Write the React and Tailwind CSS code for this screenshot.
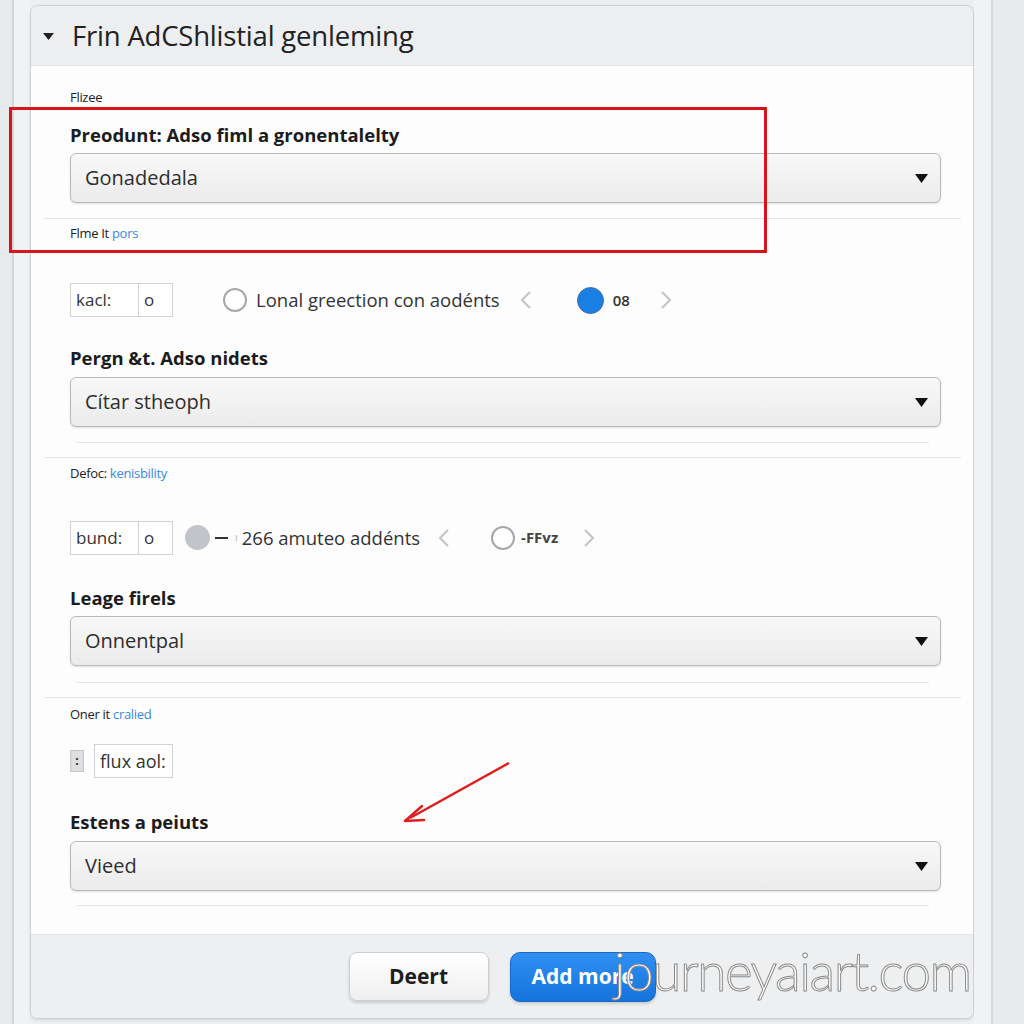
function Caret() {
  return (
    <svg width="13" height="9" viewBox="0 0 13 9">
      <path d="M0 0 H13 L6.5 9 Z" fill="#111" />
    </svg>
  );
}

function Chevron({ dir }) {
  return (
    <svg width="14" height="20" viewBox="0 0 14 20">
      <polyline
        points={dir === 'left' ? '11,2 3,10 11,18' : '3,2 11,10 3,18'}
        fill="none"
        stroke="#c3c5c8"
        strokeWidth="2.2"
      />
    </svg>
  );
}

function SelectBox({ value }) {
  return (
    <div className="h-[50px] mr-[32px] rounded-[6px] border border-[#b6b9bd] bg-gradient-to-b from-[#f8f8f8] to-[#ebebeb] shadow-[0_1px_2px_rgba(0,0,0,0.12)] flex items-center justify-between pl-[14px] pr-[12px]">
      <span className="text-[20px] text-[#2e2e2e]">{value}</span>
      <Caret />
    </div>
  );
}

function Label({ children, className }) {
  return <div className={'text-[18.5px] font-bold text-[#1c1c1c] leading-[24px] ' + className}>{children}</div>;
}

function Caption({ text, link, className }) {
  return (
    <div className={'text-[13px] leading-[16px] text-[#222] tracking-[-0.3px] ' + className}>
      {text} <span className="text-[#3a8ad8]">{link}</span>
    </div>
  );
}

function SmallInput({ label }) {
  return (
    <div className="flex h-[34px] w-[103px] border border-[#cfd2d5] bg-white text-[17px] text-[#333]">
      <div className="w-[68px] border-r border-[#cfd2d5] flex items-center pl-[5px]">{label}</div>
      <div className="flex-1 flex items-center pl-[5px]">o</div>
    </div>
  );
}

export default function App() {
  return (
    <div className="relative w-[1024px] h-[1024px] overflow-hidden flex bg-[#eceef0] font-['Open_Sans','Noto_Sans',sans-serif]">
      <div className="w-[12px] bg-[#e7e9eb]" />
      <div className="w-[2px] bg-[#d3d6d9]" />
      <div className="w-[16px] bg-[#f1f2f4]" />

      <div className="w-[944px] mt-[5px] h-[1014px] flex flex-col rounded-[8px] border border-[#cdd0d4] bg-white shadow-[0_1px_3px_rgba(0,0,0,0.1)] overflow-hidden">
        <div className="h-[60px] bg-[#eceef0] border-b border-[#dfe1e4] flex items-center pl-[12px]">
          <svg width="11" height="7" viewBox="0 0 11 7" className="mt-[2px]">
            <path d="M0 0 H11 L5.5 7 Z" fill="#222" />
          </svg>
          <span className="ml-[18px] text-[27.5px] text-[#222] tracking-[-0.2px]">Frin AdCShlistial genleming</span>
        </div>

        <div className="flex-1 flex flex-col bg-[#fdfdfd] pl-[39px]">
          <Caption text="Flizee" className="mt-[23px]" />
          <Label className="mt-[18px]">Preodunt: Adso fiml a gronentalelty</Label>
          <div className="mt-[6px]"><SelectBox value="Gonadedala" /></div>
          <div className="mt-[15px] h-px bg-[#e2e4e6] -ml-[26px] mr-[12px]" />
          <Caption text="Flme It" link="pors" className="mt-[6px]" />

          <div className="mt-[42px] flex items-center h-[34px]">
            <SmallInput label="kacl:" />
            <div className="ml-[50px] w-[24px] h-[24px] rounded-full border-2 border-[#a4a7ab] bg-white" />
            <span className="ml-[9px] text-[18.5px] text-[#333]">Lonal greection con aodénts</span>
            <div className="ml-[19px]"><Chevron dir="left" /></div>
            <div className="ml-[44px] w-[27px] h-[27px] rounded-full bg-[#1a7fe3] border border-[#3f6fa8]" />
            <span className="ml-[9px] text-[15px] font-semibold text-[#333]">08</span>
            <div className="ml-[29px]"><Chevron dir="right" /></div>
          </div>

          <Label className="mt-[29px]">Pergn &amp;t. Adso nidets</Label>
          <div className="mt-[7px]"><SelectBox value="Cítar stheoph" /></div>
          <div className="mt-[15px] h-px bg-[#e4e6e8] ml-[7px] mr-[44px]" />
          <div className="mt-[14px] h-px bg-[#e2e4e6] -ml-[26px] mr-[12px]" />
          <Caption text="Defoc:" link="kenisbility" className="mt-[7px]" />

          <div className="mt-[39px] flex items-center h-[35px]">
            <SmallInput label="bund:" />
            <div className="ml-[12px] w-[25px] h-[25px] rounded-full bg-[#c1c4c8]" />
            <div className="ml-[5px] w-[13px] h-[2px] bg-[#333]" />
            <span className="ml-[7px] text-[11px] text-[#bbb]">ı</span>
            <span className="ml-[4px] text-[18.5px] text-[#333]">266 amuteo addénts</span>
            <div className="ml-[17px]"><Chevron dir="left" /></div>
            <div className="ml-[40px] w-[24px] h-[24px] rounded-full border-2 border-[#a4a7ab] bg-white" />
            <span className="ml-[6px] text-[15px] font-bold text-[#444]">-FFvz</span>
            <div className="ml-[24px]"><Chevron dir="right" /></div>
          </div>

          <Label className="mt-[31px]">Leage firels</Label>
          <div className="mt-[6px]"><SelectBox value="Onnentpal" /></div>
          <div className="mt-[16px] h-px bg-[#e4e6e8] ml-[7px] mr-[44px]" />
          <div className="mt-[14px] h-px bg-[#e2e4e6] -ml-[26px] mr-[12px]" />
          <Caption text="Oner it" link="cralied" className="mt-[8px]" />

          <div className="mt-[22px] flex items-center h-[34px]">
            <div className="w-[14px] h-[22px] bg-[#dcdfe2] border border-[#c4c7cb] flex items-center justify-center text-[12px] font-bold leading-none text-[#222]">:</div>
            <div className="ml-[10px] w-[79px] h-[34px] border border-[#cfd2d5] bg-white flex items-center pl-[5px] text-[18px] text-[#333]">flux aol:</div>
          </div>

          <Label className="mt-[32px]">Estens a peiuts</Label>
          <div className="mt-[7px]"><SelectBox value="Vieed" /></div>
          <div className="mt-[14px] h-px bg-[#e4e6e8] ml-[7px] mr-[44px]" />
        </div>

        <div className="h-[84px] bg-[#edeff1] border-t border-[#e2e4e6] flex items-center justify-center gap-[21px]">
          <button className="w-[140px] h-[49px] rounded-[8px] border border-[#cdd0d3] bg-gradient-to-b from-white to-[#efefef] shadow-[0_2px_3px_rgba(0,0,0,0.15)] text-[21px] font-bold text-[#1e1e1e]">
            Deert
          </button>
          <button className="w-[146px] h-[50px] rounded-[10px] border border-[#1769c4] bg-gradient-to-b from-[#2f8ff0] to-[#1474dd] shadow-[0_2px_3px_rgba(0,0,0,0.15)] text-[21px] font-bold text-white text-left pl-[21px]">
            Add more
          </button>
        </div>
      </div>

      <div className="w-[17px] bg-[#f1f2f4]" />
      <div className="w-[2px] bg-[#d6d8db]" />
      <div className="flex-1 bg-[#e8eaec]" />

      <div className="absolute left-[9px] top-[107px] w-[758px] h-[146px] border-[3px] border-[#d8141b] pointer-events-none" />

      <svg className="absolute left-[400px] top-[758px]" width="115" height="68" viewBox="0 0 115 68">
        <line x1="109" y1="5" x2="10" y2="60" stroke="#dc1f1f" strokeWidth="2.5" />
        <path d="M5 63 L22 48 M5 63 L24 62" stroke="#dc1f1f" strokeWidth="2.5" fill="none" strokeLinecap="round" />
      </svg>

      <div className="absolute left-[614px] top-[944px] text-[53px] font-light leading-none text-white tracking-[-1.5px] [-webkit-text-stroke:1px_#8a8a8a] font-['Lato','Open_Sans',sans-serif]">
        journeyaiart.com
      </div>
    </div>
  );
}
